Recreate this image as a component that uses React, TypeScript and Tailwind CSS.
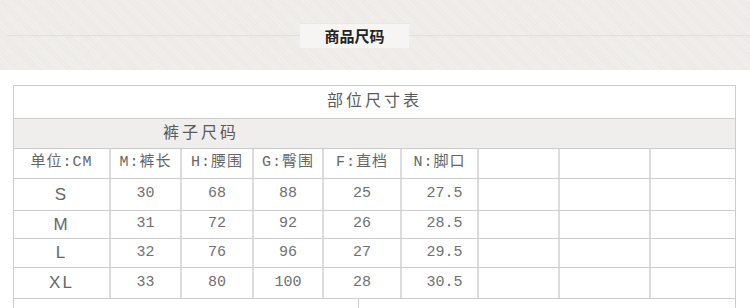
const COLS =
  "grid grid-cols-[97px_71px_72px_70px_78px_77px_81px_91px_85px]";
const CELL =
  "flex items-center justify-center border-r-2 border-[#dcdcdc] last:border-r-0";
const MONO = "font-['Liberation_Mono','Noto_Sans_CJK_SC',monospace]";

const headers = ["单位:CM", "M:裤长", "H:腰围", "G:臀围", "F:直档", "N:脚口", "", "", ""];

const rows = [
  { size: "S", h: "h-[32px]", vals: ["30", "68", "88", "25", "27.5"] },
  { size: "M", h: "h-[28px]", vals: ["31", "72", "92", "26", "28.5"] },
  { size: "L", h: "h-[29px]", vals: ["32", "76", "96", "27", "29.5"] },
  { size: "XL", h: "h-[31px]", vals: ["33", "80", "100", "28", "30.5"] },
];

function Banner() {
  return (
    <div className="h-[70px] bg-[#f2f0ed] bg-[repeating-linear-gradient(45deg,#edeae6_0px,#edeae6_1px,transparent_1px,transparent_2px),repeating-linear-gradient(-45deg,#efece9_0px,#efece9_1px,transparent_1px,transparent_3px)] pt-[23px]">
      <div className="flex items-center pl-[7px]">
        <div className="h-px w-[293px] bg-[#e3e0dc]" />
        <div className="flex h-[25px] w-[109px] items-center justify-center border-t border-[#e9e7e3] bg-[#f6f5f3] font-['Noto_Sans_CJK_SC',sans-serif] text-[15px] font-bold text-[#222]">
          商品尺码
        </div>
        <div className="h-px flex-1 bg-[#e3e0dc]" />
      </div>
    </div>
  );
}

function SizeTable() {
  return (
    <div className={`ml-[13px] mt-[15px] w-[723px] border border-b-0 border-[#cccccc] ${MONO} text-[#707070]`}>
      <div className="flex h-[33px] items-center justify-center border-b border-[#cccccc] text-[16px] tracking-[3px] text-[#5a5a5a]">
        部位尺寸表
      </div>
      <div className="flex h-[30px] items-center border-b border-[#cccccc] bg-[#efeeec] pl-[149px] text-[16px] tracking-[3px] text-[#5a5a5a]">
        裤子尺码
      </div>
      <div className={`${COLS} h-[30px] border-b border-[#cccccc] text-[15px] text-[#666]`}>
        {headers.map((t, i) => (
          <div key={i} className={`${CELL} tracking-[1px]`}>
            {t}
          </div>
        ))}
      </div>
      {rows.map((r) => (
        <div key={r.size} className={`${COLS} ${r.h} border-b border-[#cccccc] text-[15px]`}>
          <div className={`${CELL} font-['Liberation_Sans',sans-serif] text-[17px] tracking-[2px] text-[#666]`}>
            {r.size}
          </div>
          {r.vals.map((v, i) => (
            <div key={i} className={`${CELL} ${i === 4 ? "pl-[10px]" : ""}`}>
              {v}
            </div>
          ))}
          <div className={CELL} />
          <div className={CELL} />
          <div className={CELL} />
        </div>
      ))}
      <div className="grid h-[20px] grid-cols-[345px_1fr]">
        <div className="border-r border-[#cccccc]" />
        <div />
      </div>
    </div>
  );
}

export default function App() {
  return (
    <div className="h-[308px] w-[750px] overflow-hidden bg-white">
      <Banner />
      <SizeTable />
    </div>
  );
}
